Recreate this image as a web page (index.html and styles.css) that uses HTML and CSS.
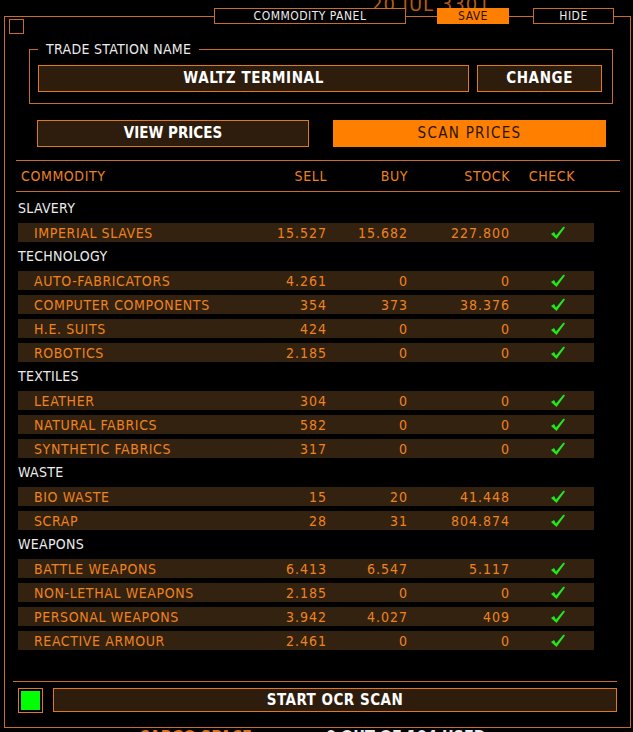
FILE: index.html
```html
<!DOCTYPE html>
<html lang="en">
<head>
  <meta charset="UTF-8" />
  <title>Commodity Panel</title>
  <link rel="stylesheet" href="styles.css">
</head>
<body>
  <div class="date">20 JUL 3301</div>

  <div class="panel">
    <div class="tabs">
      <div class="tab tab-title">COMMODITY PANEL</div>
      <div class="tab tab-save">SAVE</div>
      <div class="tab tab-hide">HIDE</div>
    </div>

    <div class="corner"></div>

    <fieldset class="station">
      <legend>TRADE STATION NAME</legend>
      <div class="station-row">
        <div class="field station-name">WALTZ TERMINAL</div>
        <div class="field station-change">CHANGE</div>
      </div>
    </fieldset>

    <div class="modes">
      <div class="mode">VIEW PRICES</div>
      <div class="mode active">SCAN PRICES</div>
    </div>

    <div class="table">
      <div class="head">
        <span class="name">COMMODITY</span>
        <span class="num">SELL</span>
        <span class="num">BUY</span>
        <span class="num">STOCK</span>
        <span class="chk">CHECK</span>
      </div>

      <div class="list">
        <div class="cat">SLAVERY</div>
        <div class="row"><span class="name">IMPERIAL SLAVES</span><span class="num">15.527</span><span class="num">15.682</span><span class="num">227.800</span><span class="chk"><svg viewBox="0 0 14 13"><path d="M0 8 L3 6 L5 9.5 L12.5 0.5 L14 1.5 L5.5 13 Z"/></svg></span></div>
        <div class="cat">TECHNOLOGY</div>
        <div class="row"><span class="name">AUTO-FABRICATORS</span><span class="num">4.261</span><span class="num">0</span><span class="num">0</span><span class="chk"><svg viewBox="0 0 14 13"><path d="M0 8 L3 6 L5 9.5 L12.5 0.5 L14 1.5 L5.5 13 Z"/></svg></span></div>
        <div class="row"><span class="name">COMPUTER COMPONENTS</span><span class="num">354</span><span class="num">373</span><span class="num">38.376</span><span class="chk"><svg viewBox="0 0 14 13"><path d="M0 8 L3 6 L5 9.5 L12.5 0.5 L14 1.5 L5.5 13 Z"/></svg></span></div>
        <div class="row"><span class="name">H.E. SUITS</span><span class="num">424</span><span class="num">0</span><span class="num">0</span><span class="chk"><svg viewBox="0 0 14 13"><path d="M0 8 L3 6 L5 9.5 L12.5 0.5 L14 1.5 L5.5 13 Z"/></svg></span></div>
        <div class="row"><span class="name">ROBOTICS</span><span class="num">2.185</span><span class="num">0</span><span class="num">0</span><span class="chk"><svg viewBox="0 0 14 13"><path d="M0 8 L3 6 L5 9.5 L12.5 0.5 L14 1.5 L5.5 13 Z"/></svg></span></div>
        <div class="cat">TEXTILES</div>
        <div class="row"><span class="name">LEATHER</span><span class="num">304</span><span class="num">0</span><span class="num">0</span><span class="chk"><svg viewBox="0 0 14 13"><path d="M0 8 L3 6 L5 9.5 L12.5 0.5 L14 1.5 L5.5 13 Z"/></svg></span></div>
        <div class="row"><span class="name">NATURAL FABRICS</span><span class="num">582</span><span class="num">0</span><span class="num">0</span><span class="chk"><svg viewBox="0 0 14 13"><path d="M0 8 L3 6 L5 9.5 L12.5 0.5 L14 1.5 L5.5 13 Z"/></svg></span></div>
        <div class="row"><span class="name">SYNTHETIC FABRICS</span><span class="num">317</span><span class="num">0</span><span class="num">0</span><span class="chk"><svg viewBox="0 0 14 13"><path d="M0 8 L3 6 L5 9.5 L12.5 0.5 L14 1.5 L5.5 13 Z"/></svg></span></div>
        <div class="cat">WASTE</div>
        <div class="row"><span class="name">BIO WASTE</span><span class="num">15</span><span class="num">20</span><span class="num">41.448</span><span class="chk"><svg viewBox="0 0 14 13"><path d="M0 8 L3 6 L5 9.5 L12.5 0.5 L14 1.5 L5.5 13 Z"/></svg></span></div>
        <div class="row"><span class="name">SCRAP</span><span class="num">28</span><span class="num">31</span><span class="num">804.874</span><span class="chk"><svg viewBox="0 0 14 13"><path d="M0 8 L3 6 L5 9.5 L12.5 0.5 L14 1.5 L5.5 13 Z"/></svg></span></div>
        <div class="cat">WEAPONS</div>
        <div class="row"><span class="name">BATTLE WEAPONS</span><span class="num">6.413</span><span class="num">6.547</span><span class="num">5.117</span><span class="chk"><svg viewBox="0 0 14 13"><path d="M0 8 L3 6 L5 9.5 L12.5 0.5 L14 1.5 L5.5 13 Z"/></svg></span></div>
        <div class="row"><span class="name">NON-LETHAL WEAPONS</span><span class="num">2.185</span><span class="num">0</span><span class="num">0</span><span class="chk"><svg viewBox="0 0 14 13"><path d="M0 8 L3 6 L5 9.5 L12.5 0.5 L14 1.5 L5.5 13 Z"/></svg></span></div>
        <div class="row"><span class="name">PERSONAL WEAPONS</span><span class="num">3.942</span><span class="num">4.027</span><span class="num">409</span><span class="chk"><svg viewBox="0 0 14 13"><path d="M0 8 L3 6 L5 9.5 L12.5 0.5 L14 1.5 L5.5 13 Z"/></svg></span></div>
        <div class="row"><span class="name">REACTIVE ARMOUR</span><span class="num">2.461</span><span class="num">0</span><span class="num">0</span><span class="chk"><svg viewBox="0 0 14 13"><path d="M0 8 L3 6 L5 9.5 L12.5 0.5 L14 1.5 L5.5 13 Z"/></svg></span></div>
      </div>
    </div>

    <div class="footer">
      <div class="led"><div class="led-on"></div></div>
      <div class="ocr">START OCR SCAN</div>
    </div>
  </div>

  <div class="status">
    <span class="status-label">CARGO SPACE</span>
    <span class="status-value">0 OUT OF 104 USED</span>
  </div>
</body>
</html>
```

FILE: styles.css
```css
:root {
  --orange: #e07a22;
  --orange-text: #ee8220;
  --line: #c86e24;
  --row-bg: #33220f;
  --btn-bg: #2e1d0c;
  --white: #ececec;
  --green: #1fe81f;
}

* {
  box-sizing: border-box;
}

body {
  margin: 0;
  background: #000;
  color: var(--white);
  font-family: "DejaVu Sans Condensed", "Liberation Sans", sans-serif;
  font-size: 14px;
  width: 633px;
  height: 732px;
  overflow: hidden;
  position: relative;
}

/* date shown behind the panel header */
.date {
  position: absolute;
  top: -8px;
  left: 371px;
  font-size: 20px;
  color: #b45a10;
  letter-spacing: 1px;
}

.panel {
  position: relative;
  margin: 16px 2px 0 4px;
  height: 712px;
  border: 1px solid var(--line);
}

.tabs {
  position: absolute;
  top: -9px;
  left: 209px;
  display: flex;
  height: 16px;
}

.tab {
  height: 16px;
  line-height: 14px;
  font-size: 12px;
  letter-spacing: 0.5px;
  text-align: center;
  border: 1px solid var(--line);
  background: #000;
  color: var(--white);
}

.tab-title {
  width: 192px;
}

.tab-save {
  width: 72px;
  margin-left: 31px;
  background: #ff7f00;
  border-color: #ff7f00;
  color: #2a1400;
}

.tab-hide {
  width: 81px;
  margin-left: 24px;
}

.corner {
  width: 15px;
  height: 15px;
  margin: 2px 0 0 4px;
  border: 1px solid var(--line);
}

.station {
  margin: 7px 17px 0 24px;
  padding: 8px 10px 11px 8px;
  border: 1px solid var(--line);
  min-width: 0;
}

.station legend {
  padding: 0 8px;
  line-height: 16px;
  font-size: 14px;
  letter-spacing: 0.3px;
  color: var(--white);
}

.station-row {
  display: flex;
  gap: 8px;
}

.field {
  height: 27px;
  line-height: 25px;
  text-align: center;
  font-weight: bold;
  font-size: 15px;
  letter-spacing: 0.6px;
  color: #fff;
  background: var(--btn-bg);
  border: 1px solid var(--orange);
}

.station-name {
  width: 432px;
}

.station-change {
  width: 125px;
}

.modes {
  display: flex;
  gap: 24px;
  margin: 16px 0 0 32px;
}

.mode {
  width: 272px;
  height: 27px;
  line-height: 25px;
  text-align: center;
  font-weight: bold;
  font-size: 15px;
  color: #fff;
  background: var(--btn-bg);
  border: 1px solid var(--orange);
}

.mode.active {
  width: 273px;
  background: #ff7f00;
  border-color: #ff7f00;
  color: #2a1400;
  font-weight: normal;
  letter-spacing: 1.3px;
}

.table {
  margin: 13px 10px 0 11px;
  border-top: 1px solid var(--line);
}

.head,
.row {
  display: grid;
  grid-template-columns: 1fr 80px 81px 102px 84px;
  align-items: center;
  width: 576px;
  margin-left: 2px;
}

.head {
  height: 30px;
  color: var(--orange-text);
  letter-spacing: 0.6px;
}

.list {
  border-top: 1px solid var(--line);
  padding-top: 7px;
}

.head .name {
  padding-left: 3px;
}

.num {
  text-align: right;
}

.row .num {
  letter-spacing: 1px;
}

.chk {
  display: flex;
  justify-content: center;
  padding-left: 12px;
}

.head .chk {
  padding-left: 0;
}

.cat {
  height: 19px;
  line-height: 19px;
  margin: 0 0 5px 2px;
  letter-spacing: 0.3px;
  color: var(--white);
}

.row {
  height: 19px;
  margin-bottom: 5px;
  background: var(--row-bg);
  color: var(--orange-text);
}

.row .name {
  padding-left: 16px;
  letter-spacing: 0.6px;
}

.chk svg {
  width: 14px;
  height: 13px;
  fill: var(--green);
}

.footer {
  display: flex;
  align-items: flex-start;
  gap: 10px;
  margin: 31px 13px 0 8px;
  padding: 6px 0 0 5px;
  border-top: 1px solid var(--line);
}

.led {
  width: 25px;
  height: 25px;
  padding: 2px;
  border: 1px solid var(--orange);
}

.led-on {
  width: 100%;
  height: 100%;
  background: #00ff00;
}

.ocr {
  flex: 1;
  height: 24px;
  line-height: 22px;
  text-align: center;
  font-weight: bold;
  font-size: 15px;
  letter-spacing: 0.5px;
  color: #fff;
  background: var(--btn-bg);
  border: 1px solid var(--orange);
}

.status {
  display: flex;
  margin-top: 1px;
  padding-left: 139px;
  font-size: 16px;
  font-weight: bold;
  line-height: 16px;
}

.status-label {
  color: #e0731a;
  width: 187px;
}

.status-value {
  color: var(--white);
}
```
